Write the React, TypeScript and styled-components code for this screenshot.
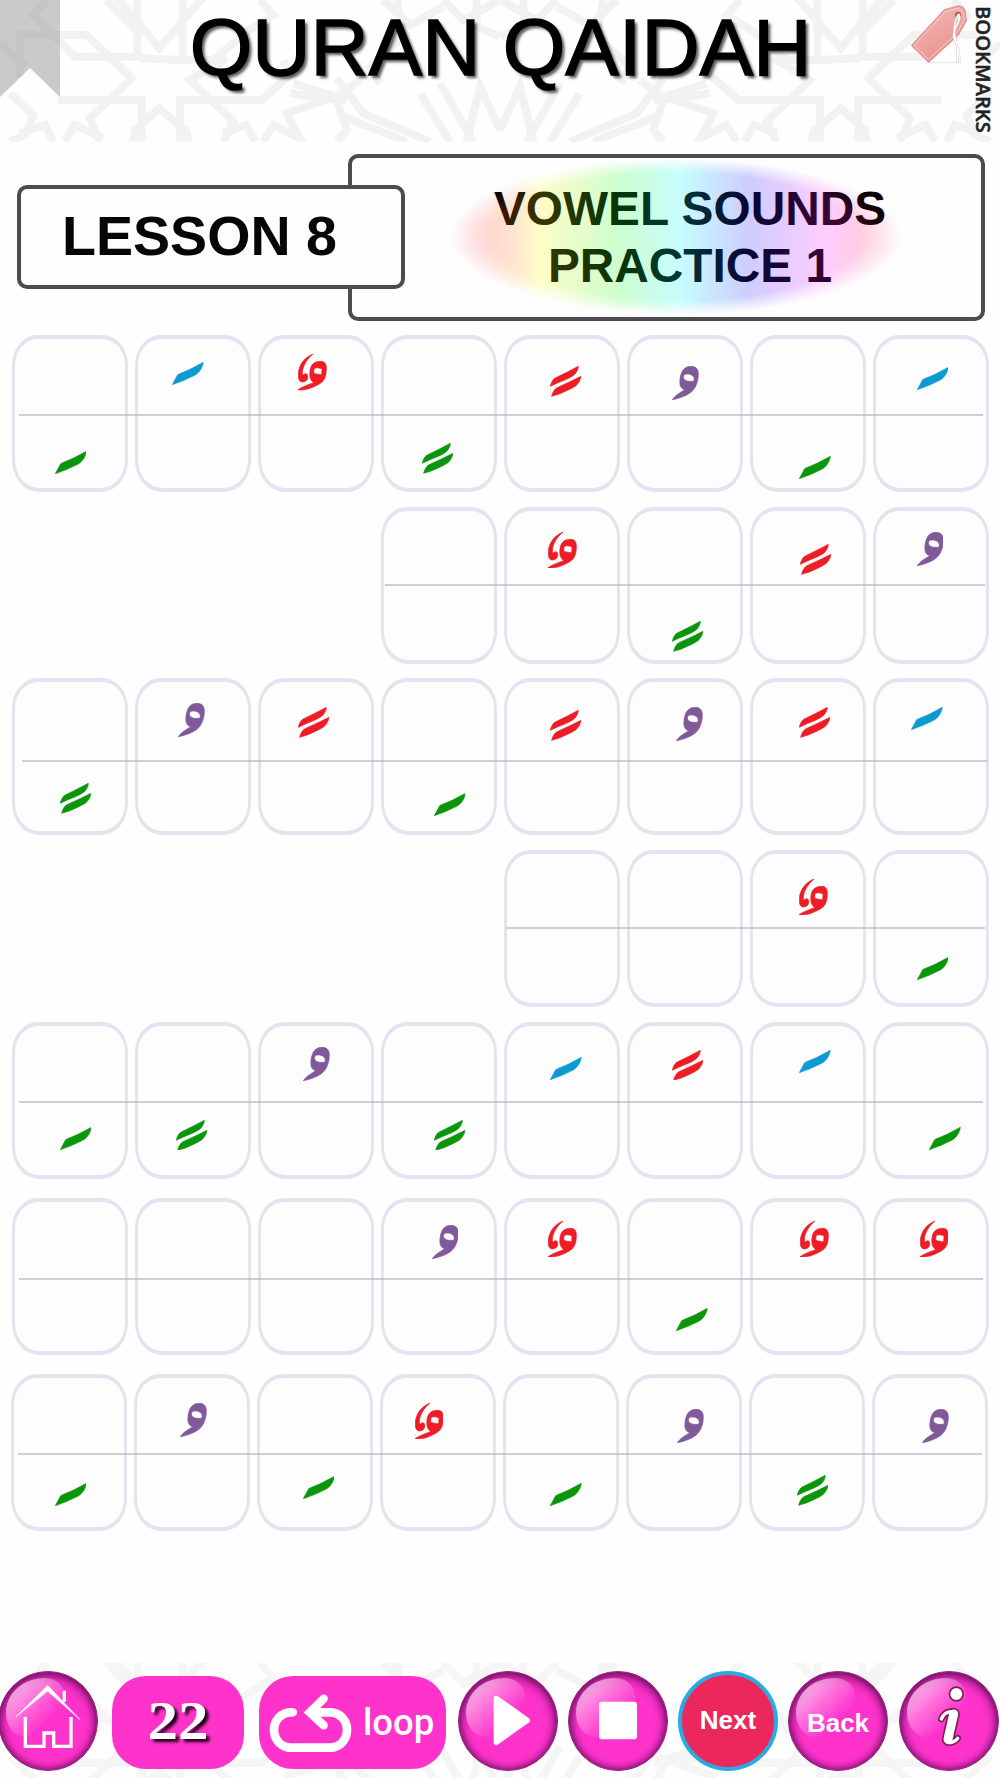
import styled, { createGlobalStyle } from "styled-components";
import type { ReactNode } from 'react'

type MarkKind = 'dash' | 'double' | 'waw' | 'twist'

type MarkProps = {
    kind: MarkKind,
    color: string,
    x: number,
    y: number
}

type RowProps = {
    top: number,
    shift?: number,
    line: [number, number, number],
    cells: (MarkProps | null | undefined)[]
}

const GREEN = '#0a960a';
const BLUE = '#0c9ad3';
const RED = '#ee1c24';
const PURPLE = '#80599a';

const GlobalStyle = createGlobalStyle`
    body {
        margin: 0;
        background: #ffffff;
    }
    * {
        box-sizing: border-box;
    }
`;

const Page = styled.div`
    display: flex;
    flex-direction: column;
    width: 1000px;
    height: 1778px;
    overflow: hidden;
    background-color: #fefefe;
    font-family: "Liberation Sans", Arial, sans-serif;
`;

const Header = styled.header`
    position: relative;
    display: grid;
    grid-template-columns: 150px 1fr 150px;
    height: 142px;
    overflow: hidden;
`;

const PatternSvg = styled.svg<{ $faint?: boolean }>`
    position: absolute;
    left: 0;
    top: 0;
    width: 1000px;
    height: 142px;
    opacity: ${({ $faint }) => $faint ? 0.7 : 1};
`;

const Ribbon = styled.div`
    position: relative;
    width: 60px;
    height: 97px;
    background-color: rgba(150, 150, 150, 0.5);
    clip-path: polygon(0 0, 100% 0, 100% 100%, 50% 70%, 0 100%);
`;

const Title = styled.h1`
    position: relative;
    margin: 1px 0 0 1px;
    text-align: center;
    font-weight: normal;
    font-size: 80.5px;
    line-height: 92px;
    white-space: nowrap;
    color: #000000;
    -webkit-text-stroke: 1.4px #000000;
    text-shadow: 3px 3px 3px rgba(0, 0, 0, 0.65);
`;

const BookmarkLink = styled.div`
    position: relative;
    display: flex;
    align-items: flex-start;
    padding: 4px 0 0 59px;
`;

const BookmarkText = styled.span`
    margin: 2px 0 0 3px;
    writing-mode: vertical-rl;
    font-family: "Open Sans", sans-serif;
    font-weight: 600;
    font-size: 20.2px;
    line-height: 24px;
    color: #222222;
    -webkit-text-stroke: 0.5px #222222;
`;

const Banner = styled.div`
    display: flex;
    align-items: center;
    height: 167px;
    margin: 12px 0 0 17px;
`;

const LessonBox = styled.div`
    z-index: 1;
    width: 388px;
    height: 104px;
    margin-bottom: 2px;
    padding-left: 41px;
    border: 4px solid #4c4c4e;
    border-radius: 10px;
    background-color: #fefdfe;
    font-weight: bold;
    font-size: 55.6px;
    line-height: 95px;
    color: #060606;
`;

const TopicBox = styled.div`
    position: relative;
    width: 637px;
    height: 167px;
    margin-left: -57px;
    padding: 22px 0 0 47px;
    border: 4px solid #4c4c4e;
    border-radius: 10px;
    background-color: #fefdfe;
    text-align: center;
    font-weight: bold;
    font-size: 47.8px;
    line-height: 57px;
    color: #000000;
`;

const Rainbow = styled.div`
    position: absolute;
    left: 98px;
    top: 0;
    width: 452px;
    height: 157px;
    border-radius: 50%;
    opacity: 0.21;
    background: linear-gradient(90deg, #ff2020 5%, #ff8020 13%, #ffff00 20%, #20ff20 37%, #00ffff 51%, #2020ff 66%, #ff20ff 83%, #ff2020 98%);
    mask-image: radial-gradient(closest-side, #000 82%, transparent 100%);
`;

const Board = styled.main`
    padding: 14px 0 0 12px;
`;

const BoardRow = styled.div<{ $gap: number, $shift: number }>`
    position: relative;
    display: grid;
    grid-template-columns: repeat(8, 116px);
    column-gap: 7px;
    height: 157px;
    margin: ${({ $gap }) => $gap}px 0 0 ${({ $shift }) => $shift}px;
`;

const RowLine = styled.div<{ $left: number, $width: number, $top: number }>`
    position: absolute;
    left: ${({ $left }) => $left}px;
    top: ${({ $top }) => $top}px;
    width: ${({ $width }) => $width}px;
    height: 2px;
    background-color: rgba(175, 175, 180, 0.6);
`;

const Cell = styled.div<{ $hidden: boolean }>`
    border: solid #e4e3ef;
    border-width: 4px 3px;
    border-radius: 26px 26px 27px 27px / 30px 30px 32px 32px;
    background-color: #fefdfe;
    visibility: ${({ $hidden }) => $hidden ? 'hidden' : 'visible'};
`;

const MarkSvg = styled.svg<{ $x: number, $y: number }>`
    display: block;
    margin: ${({ $y }) => $y - 4}px 0 0 ${({ $x }) => $x - 3}px;
`;

const Footer = styled.footer`
    position: relative;
    display: flex;
    align-items: flex-start;
    height: 115px;
    margin-top: auto;
    padding-top: 8px;
    overflow: hidden;
`;

const RoundButton = styled.button<{ $left: number }>`
    position: relative;
    flex: none;
    width: 100px;
    height: 100px;
    margin: 0 0 0 ${({ $left }) => $left}px;
    padding: 0;
    border: 1px solid #8b2a78;
    border-radius: 50%;
    background: #ff33cc;
    box-shadow: inset 0 3px 12px 1px rgba(70, 5, 70, 0.65), inset 0 0 6px 1px rgba(70, 5, 70, 0.6);
    font-family: "Liberation Sans", Arial, sans-serif;
    font-weight: bold;
    font-size: 26px;
    color: #ffffff;
`;

const NextButton = styled(RoundButton)`
    border: 4px solid #29abe2;
    background: #ec275b;
    box-shadow: none;
`;

const ButtonArt = styled.svg`
    position: absolute;
    left: -1px;
    top: -1px;
    width: 100px;
    height: 100px;
`;

const ButtonLabel = styled.span<{ $top: number }>`
    position: relative;
    top: ${({ $top }) => $top}px;
`;

const Pill = styled.div<{ $width: number, $left: number }>`
    position: relative;
    display: flex;
    flex: none;
    align-items: center;
    width: ${({ $width }) => $width}px;
    height: 93px;
    margin: 5px 0 0 ${({ $left }) => $left}px;
    border-radius: 34px;
    background-color: #ff33cc;
    color: #ffffff;
`;

const LoopPill = styled(Pill)`
    padding-left: 9px;
`;

const PageNumber = styled.span`
    margin: 0 auto;
    padding: 0 0 3px 0;
    font-family: "Liberation Serif", "Times New Roman", serif;
    font-weight: bold;
    font-size: 54px;
    transform: scaleX(1.13);
    text-shadow: 3px 3px 3px #200018;
`;

const LoopLabel = styled.span`
    margin: 0 0 0 10px;
    font-family: Roboto, sans-serif;
    font-weight: 500;
    font-size: 36.5px;
`;

const MARKS: Record<MarkKind, { w: number, h: number, d: string }> = {
    dash: {
        w: 95, h: 69,
        d: 'M1 68L17 38C28 32 42 28 56 21L94 1C93 9 89 20 83 27C78 33 74 37 68 40L36 55Z'
    },
    double: {
        w: 94, h: 92,
        d: 'M1 61C3 51 7 43 14 37L54 17L85 1C85 10 80 20 72 27C60 36 40 44 24 50ZM5 91C7 81 11 73 19 66L60 47L93 31C92 41 86 52 78 59C64 69 44 76 28 84Z'
    },
    waw: {
        w: 80, h: 102,
        d: 'M1 101C8 89 24 80 38 71C26 68 22 58 24 40C27 12 40 1 56 1C72 1 79 9 79 24C79 48 70 70 54 81C38 92 18 98 1 101ZM36 27C31 37 38 44 50 46L65 46C68 40 67 34 62 29C55 23 41 22 36 27Z'
    },
    twist: {
        w: 85, h: 109,
        d: 'M45 0C20 10 2 32 1 60C0 75 4 84 14 84C27 83 32 72 28 62C24 56 19 60 14 64C10 42 24 18 45 0ZM0 107C12 98 30 92 47 86C36 78 34 65 36 50C38 31 50 22 68 22C81 22 86 30 85 48C84 70 78 83 60 92C40 103 20 110 0 107ZM48 44L47 57C54 61 62 61 71 62L72 45C64 41 54 40 48 44Z'
    }
}

const m = (kind: MarkKind, color: string, x: number, y: number): MarkProps => ({ kind, color, x, y })

// x and y are measured from the corner of the cell, undefined leaves the place without a cell
const ROWS: RowProps[] = [
    {
        top: 0, line: [7, 964, 79], cells: [
            m('dash', GREEN, 42.7, 115.7), m('dash', BLUE, 37.3, 26.7), m('twist', RED, 40.3, 19.3), m('double', GREEN, 40.7, 108),
            m('double', RED, 46, 31.3), m('waw', PURPLE, 45.3, 31), m('dash', GREEN, 49, 120.7), m('dash', BLUE, 43.7, 31.7)]
    },
    {
        top: 15, line: [373, 600, 77], cells: [
            undefined, undefined, undefined, null,
            m('twist', RED, 44.3, 25), m('double', GREEN, 44.7, 114), m('double', RED, 49.7, 37.3), m('waw', PURPLE, 43.7, 25)]
    },
    {
        top: 14, line: [10, 965, 82], cells: [
            m('double', GREEN, 48, 105), m('waw', PURPLE, 43, 25.3), m('double', RED, 40, 29.3), m('dash', GREEN, 52.7, 115),
            m('double', RED, 46, 32.3), m('waw', PURPLE, 49.3, 29), m('double', RED, 49, 29.3), m('dash', BLUE, 38, 29.3)]
    },
    {
        top: 15, line: [494, 479, 77], cells: [
            undefined, undefined, undefined, undefined,
            null, null, m('twist', RED, 49.3, 28.7), m('dash', GREEN, 43.7, 107.3)]
    },
    {
        top: 15, line: [7, 964, 79], cells: [
            m('dash', GREEN, 47.7, 105), m('double', GREEN, 40.7, 97.5), m('waw', PURPLE, 45.3, 24.5), m('double', GREEN, 53, 97.5),
            m('dash', BLUE, 46, 34.8), m('double', RED, 45, 27.6), m('dash', BLUE, 49, 28), m('dash', GREEN, 56.3, 105)]
    },
    {
        top: 19, line: [7, 964, 80], cells: [
            null, null, null, m('waw', PURPLE, 50.7, 27.2),
            m('twist', RED, 44.3, 22.7), m('dash', GREEN, 49, 110.2), m('twist', RED, 50.3, 22.7), m('twist', RED, 47, 22.7)]
    },
    {
        top: 19, shift: -1, line: [7, 964, 79], cells: [
            m('dash', GREEN, 43.7, 109.1), m('waw', PURPLE, 46, 28.9), m('dash', GREEN, 45.7, 101.9), m('twist', RED, 35, 29),
            m('dash', GREEN, 47, 109.1), m('waw', PURPLE, 51, 34.8), m('double', GREEN, 48, 101.2), m('waw', PURPLE, 50.3, 34.8)]
    }
]

const Mark = ({ kind, color, x, y }: MarkProps) => {
    const { w, h, d } = MARKS[kind];
    return (
        <MarkSvg $x={x} $y={y} width={w / 3} height={h / 3} viewBox={`0 0 ${w} ${h}`}>
            <path d={d} fill={color} fillRule="evenodd" stroke={color} strokeWidth="2" strokeLinejoin="round" />
        </MarkSvg>
    );
}

const HalfPattern = () => (
    <>
        <path d="M320 0L412 95V170H225L100 45L140 0M548 0V180H640L740 95L820 45L780 0M340 -20L478 145L620 -20M412 0V90" />
        <path d="M60 230V105H260L395 235L270 355L300 425M0 130L75 200M420 175L540 180M680 175L570 240L700 365L670 425" />
        <path d="M175 300H425V425M540 425V300H785L870 225L850 180M400 425L405 390L478 325L560 395L565 425" />
        <path d="M30 280L100 345L75 405L30 425M60 400L135 375L160 425M195 425L225 375L310 415M670 400L740 375L765 425M790 425L820 375L900 415L860 340L1020 285L1080 240" />
        <path d="M870 280L1010 300L1040 390L1010 425M1030 350L1220 425M880 250L1040 300M1010 235L1090 340L1290 425M1260 280L1350 425M1320 250L1420 425M1400 425L1440 260L1500 390" />
        <path d="M1150 0L1230 75L1330 20M1190 0L1210 110L1110 200L1140 250M1330 0L1390 60L1500 0M1430 0V80L1500 110" />
    </>
)

const Pattern = ({ faint }: { faint?: boolean }) => (
    <PatternSvg $faint={faint} viewBox="0 0 3000 426" preserveAspectRatio="none">
        <g fill="none" stroke="#f2f2f2" strokeWidth="24">
            <HalfPattern />
            <g transform="translate(3000 0) scale(-1 1)"><HalfPattern /></g>
        </g>
    </PatternSvg>
)

const GlossyButton = ({ left, children }: { left: number, children: ReactNode }) => (
    <RoundButton $left={left}>
        <ButtonArt viewBox="0 0 300 300">
            <defs>
                <linearGradient id="gloss" x1="0.12" y1="0.12" x2="0.72" y2="0.72">
                    <stop offset="0" stopColor="#fff" stopOpacity="0.66" />
                    <stop offset="0.5" stopColor="#fff" stopOpacity="0.3" />
                    <stop offset="1" stopColor="#fff" stopOpacity="0" />
                </linearGradient>
            </defs>
            <path d="M24 125C24 66 76 21 141 21C178 21 200 48 201 73C205 115 190 145 165 165C135 190 115 197 76 197C45 193 24 160 24 125Z" fill="url(#gloss)" />
        </ButtonArt>
        {children}
    </RoundButton>
)

const TagIcon = () => (
    <svg width="60" height="62" viewBox="0 0 180 186">
        <defs>
            <linearGradient id="tag" x1="0" y1="0" x2="0.6" y2="1">
                <stop offset="0" stopColor="#f8bcb8" />
                <stop offset="1" stopColor="#e8918e" />
            </linearGradient>
        </defs>
        <path d="M50 176H160" stroke="#e4e4e4" strokeWidth="3" />
        <path d="M8 124L107 17L150 6Q164 8 168 22L172 50L148 92L59 174Z" fill="url(#tag)" stroke="#dc9593" strokeWidth="4" strokeLinejoin="round" />
        <path d="M15 124L110 23L149 12L164 26L166 48L143 89L58 166Z" fill="none" stroke="#f9cdca" strokeWidth="3" />
        <circle cx="147" cy="32" r="9" fill="#a95d5d" />
        <path d="M149 30C136 52 132 84 141 114C146 132 146 154 144 176M149 30C160 50 132 70 134 98C138 120 156 140 150 176" fill="none" stroke="#c9c9c9" strokeWidth="7" />
        <path d="M149 30C136 52 132 84 141 114C146 132 146 154 144 176M149 30C160 50 132 70 134 98C138 120 156 140 150 176" fill="none" stroke="#ffffff" strokeWidth="4" />
    </svg>
)

const InfoStrokes = ({ color, grow }: { color: string, grow: number }) => (
    <g fill="none" stroke={color} strokeLinecap="round" strokeLinejoin="round">
        <circle cx="172" cy="69" r="9" strokeWidth={18 + grow} />
        <path d="M164 129L147 205" strokeWidth={27 + grow} />
        <path d="M127 144Q137 121 160 122M146 215Q164 216 176 202" strokeWidth={10 + grow} />
    </g>
)

const App = () => {
    return (
        <>
            <GlobalStyle />
            <Page>
                <Header>
                    <Pattern />
                    <Ribbon />
                    <Title>QURAN QAIDAH</Title>
                    <BookmarkLink>
                        <TagIcon />
                        <BookmarkText>BOOKMARKS</BookmarkText>
                    </BookmarkLink>
                </Header>
                <Banner>
                    <LessonBox>LESSON 8</LessonBox>
                    <TopicBox>
                        VOWEL SOUNDS<br />PRACTICE 1
                        <Rainbow />
                    </TopicBox>
                </Banner>
                <Board>
                    {ROWS.map((row, i) => (
                        <BoardRow key={i} $gap={row.top} $shift={row.shift || 0}>
                            {row.cells.map((cell, j) => (
                                <Cell key={j} $hidden={cell === undefined}>
                                    {cell && <Mark {...cell} />}
                                </Cell>
                            ))}
                            <RowLine $left={row.line[0]} $width={row.line[1]} $top={row.line[2]} />
                        </BoardRow>
                    ))}
                </Board>
                <Footer>
                    <Pattern faint />
                    <GlossyButton left={-2}>
                        <ButtonArt viewBox="0 0 300 300">
                            <path d="M54 137L149 43L246 146L149 60Z" fill="#fff" stroke="#fff" strokeWidth="2" />
                            <path d="M199 59V92M82 138V226H138V186H167V226H219V138" fill="none" stroke="#fff" strokeWidth="10" />
                        </ButtonArt>
                    </GlossyButton>
                    <Pill $width={132} $left={14}>
                        <PageNumber>22</PageNumber>
                    </Pill>
                    <LoopPill $width={187} $left={15}>
                        <svg width="85" height="62" viewBox="805 150 255 186">
                            <path d="M880 211H873A50 53 0 0 0 873 317H992A50 53 0 0 0 992 211H940" fill="none" stroke="#fff" strokeWidth="26" />
                            <circle cx="880" cy="211" r="12" fill="#fff" />
                            <path d="M972 170L930 211L972 250" fill="none" stroke="#fff" strokeWidth="25" strokeLinecap="round" />
                        </svg>
                        <LoopLabel>loop</LoopLabel>
                    </LoopPill>
                    <GlossyButton left={12}>
                        <ButtonArt viewBox="0 0 300 300">
                            <path d="M115 82L208 148L115 214Z" fill="#fff" stroke="#fff" strokeWidth="16" strokeLinejoin="round" />
                        </ButtonArt>
                    </GlossyButton>
                    <GlossyButton left={10}>
                        <ButtonArt viewBox="0 0 300 300">
                            <rect x="93" y="92" width="114" height="113" rx="9" fill="#fff" />
                        </ButtonArt>
                    </GlossyButton>
                    <NextButton $left={10}><ButtonLabel $top={-1}>Next</ButtonLabel></NextButton>
                    <GlossyButton left={10}><ButtonLabel $top={2}>Back</ButtonLabel></GlossyButton>
                    <GlossyButton left={11}>
                        <ButtonArt viewBox="0 0 300 300">
                            <InfoStrokes color="#7d2050" grow={10} />
                            <InfoStrokes color="#ffffff" grow={0} />
                        </ButtonArt>
                    </GlossyButton>
                </Footer>
            </Page>
        </>
    );
}

export default App
